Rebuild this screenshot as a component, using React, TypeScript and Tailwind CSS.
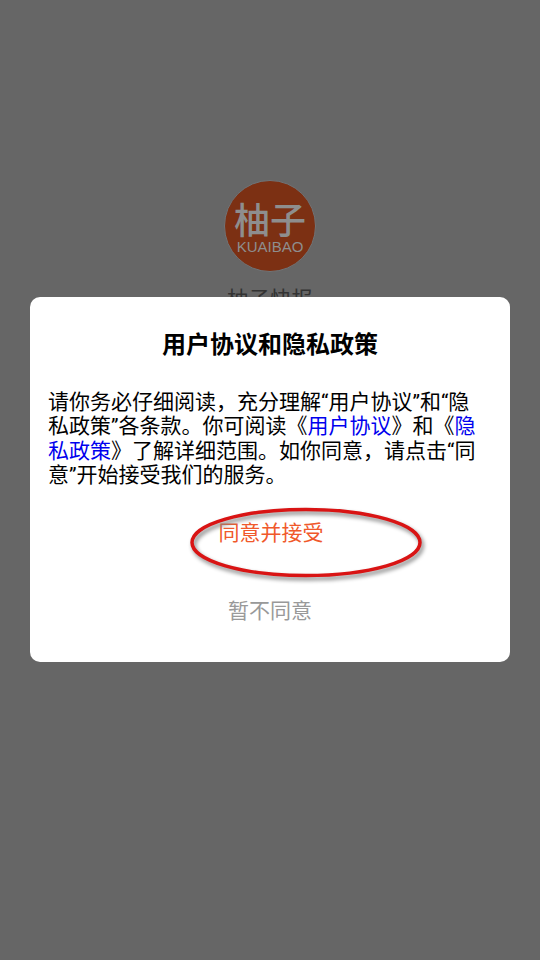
const cjk = 'font-["Roboto","Noto_Sans_CJK_SC",sans-serif]';

function Logo() {
  return (
    <div className="flex h-[92px] w-[92px] flex-col items-center rounded-full border border-[#6f7478] bg-[#7c3013] pt-[23px]">
      <div className="text-[36px] leading-[36px] font-medium text-[#8e8e8e]">柚子</div>
      <div className="font-['Liberation_Sans',sans-serif] text-[15px] leading-[13px] text-[#8e8e8e]">
        KUAIBAO
      </div>
    </div>
  );
}

export default function App() {
  return (
    <div className={`relative h-[960px] w-[540px] overflow-hidden bg-[#666666] [text-spacing-trim:space-all] ${cjk}`}>
      {/* Splash behind the dimmed layer */}
      <div className="flex flex-col items-center pt-[180px]">
        <Logo />
        <div className="mt-[13px] text-[21.5px] leading-[30px] text-[#333333]">柚子快报</div>
      </div>

      {/* Dialog */}
      <div className="absolute top-[297px] left-[30px] flex h-[365px] w-[480px] flex-col rounded-[10px] bg-white">
        <h1 className="mt-[33px] text-center text-[24px] leading-[30px] font-bold text-black">
          用户协议和隐私政策
        </h1>
        <p className="mt-[30px] pr-[34px] pl-[18px] text-[21px] leading-[24.3px] text-black">
          请你务必仔细阅读，充分理解“用户协议”和“隐私政策”各条款。你可阅读《
          <span className="text-[#0000ee]">用户协议</span>》和《
          <span className="text-[#0000ee]">隐私政策</span>》了解详细范围。如你同意，请点击“同意”开始接受我们的服务。
        </p>
        <div className="mt-[31px] flex flex-col items-center">
          <button className="ml-[2px] text-[21px] leading-[30px] text-[#f0592b]">同意并接受</button>
          <button className="mt-[48px] text-[21px] leading-[30px] text-[#999999]">暂不同意</button>
        </div>
      </div>

      {/* Red hand-drawn ring on top */}
      <svg
        className="absolute top-[500px] left-[180px] [filter:drop-shadow(2px_3px_2px_#808080)]"
        width="256"
        height="90"
        viewBox="0 0 256 90"
      >
        <ellipse cx="126" cy="42.5" rx="114" ry="33" fill="none" stroke="#d91414" strokeWidth="3.5" />
      </svg>
    </div>
  );
}
